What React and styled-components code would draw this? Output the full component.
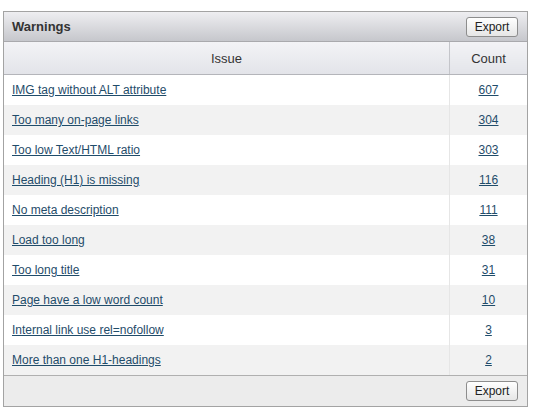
import React from 'react';
import styled, { createGlobalStyle } from 'styled-components';

const GlobalStyle = createGlobalStyle`
  body {
    margin: 0;
    background: #ffffff;
    font-family: "Liberation Sans", Arial, sans-serif;
  }
`;

const Panel = styled.div`
  margin: 11px 0 0 3px;
  width: 523px;
  border: 1px solid #a3a3a3;
  background: #ffffff;
`;

const Header = styled.div`
  display: flex;
  justify-content: space-between;
  align-items: center;
  height: 29px;
  padding: 0 9px 0 8px;
  border-bottom: 1px solid #a9a9ad;
  background: linear-gradient(#eeeef1, #c6c7cc);
`;

const Title = styled.h2`
  margin: 0;
  font-size: 13px;
  font-weight: bold;
  color: #333333;
`;

const Button = styled.button`
  height: 20px;
  width: 52px;
  padding: 0;
  font-family: "Liberation Sans", Arial, sans-serif;
  font-size: 12px;
  color: #222222;
  border: 1px solid #8d8d8d;
  border-radius: 3px;
  background: linear-gradient(#ffffff, #e6e6e6);
`;

const Table = styled.table`
  width: 100%;
  border-collapse: collapse;
  font-size: 12px;
`;

const Th = styled.th`
  height: 32px;
  padding: 0;
  font-weight: normal;
  color: #333333;
  font-size: 13px;
  text-align: center;
  border-bottom: 1px solid #b4b5ba;
  background: linear-gradient(#f3f3f6, #e3e4e9);
  & + & {
    border-left: 1px solid #c4c5ca;
  }
`;

const Row = styled.tr`
  background: ${(p) => (p.$alt ? '#f2f2f2' : '#ffffff')};
`;

const Td = styled.td`
  height: 30px;
  padding: 0 0 0 8px;
  & + & {
    width: 77px;
    padding: 0;
    text-align: center;
    border-left: 1px solid #e6e6e6;
  }
`;

const Link = styled.a`
  color: #1f4c6a;
  text-decoration: underline;
  cursor: pointer;
`;

const Footer = styled.div`
  display: flex;
  justify-content: flex-end;
  align-items: center;
  height: 30px;
  padding-right: 9px;
  border-top: 1px solid #b0b0b0;
  background: #ececec;
`;

const warnings = [
  ['IMG tag without ALT attribute', 607],
  ['Too many on-page links', 304],
  ['Too low Text/HTML ratio', 303],
  ['Heading (H1) is missing', 116],
  ['No meta description', 111],
  ['Load too long', 38],
  ['Too long title', 31],
  ['Page have a low word count', 10],
  ['Internal link use rel=nofollow', 3],
  ['More than one H1-headings', 2],
];

export default function App() {
  return (
    <>
      <GlobalStyle />
      <Panel>
        <Header>
          <Title>Warnings</Title>
          <Button>Export</Button>
        </Header>
        <Table>
          <thead>
            <tr>
              <Th>Issue</Th>
              <Th>Count</Th>
            </tr>
          </thead>
          <tbody>
            {warnings.map(([issue, count], i) => (
              <Row key={issue} $alt={i % 2 === 1}>
                <Td><Link>{issue}</Link></Td>
                <Td><Link>{count}</Link></Td>
              </Row>
            ))}
          </tbody>
        </Table>
        <Footer>
          <Button>Export</Button>
        </Footer>
      </Panel>
    </>
  );
}
